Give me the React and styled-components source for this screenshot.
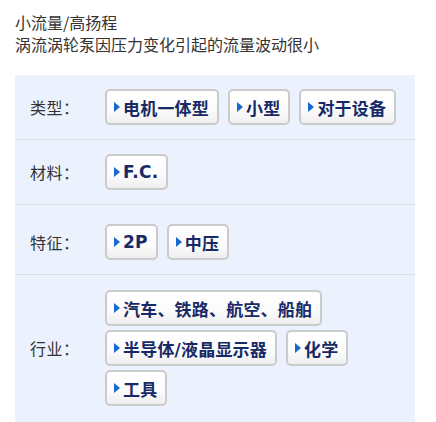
import React from "react";
import styled, { createGlobalStyle } from "styled-components";

const Global = createGlobalStyle`
  html, body { margin: 0; padding: 0; background: #fff; }
  body { font-family: "Noto Sans CJK SC", "Noto Sans", sans-serif; }
`;

const Page = styled.div`
  padding: 11px 21px 0 15px;
`;

const Intro = styled.div`
  font-size: 16px;
  line-height: 22px;
  color: #333;
  letter-spacing: 0;
  margin-bottom: 20px;
`;

const Panel = styled.div`
  background: #ebf1fd;
  padding-bottom: 2px;
`;

const Row = styled.div`
  display: flex;
  align-items: center;
  padding: ${(p) => p.$top || 14}px 10px 14px 0;
  border-top: ${(p) => (p.$first ? "none" : "1px solid #d9dde6")};
`;

const Label = styled.div`
  width: 75px;
  padding-left: 15px;
  flex: none;
  font-size: 16px;
  color: #333;
  letter-spacing: 0.5px;
`;

const Tags = styled.div`
  display: flex;
  flex-wrap: wrap;
  gap: 4px 9px;
  flex: 1;
`;

const Tag = styled.a`
  box-sizing: border-box;
  display: inline-flex;
  align-items: center;
  height: 36px;
  padding: 0 8px 0 7px;
  border: 2px solid #cbcbcb;
  border-radius: 5px;
  background: linear-gradient(#ffffff 0%, #fbfbfb 60%, #efefef 100%);
  color: #172a66;
  font-family: "DejaVu Sans", "Noto Sans CJK SC", sans-serif;
  font-size: 17px;
  font-weight: bold;
  letter-spacing: 0.2px;
  text-decoration: none;
  white-space: nowrap;
`;

const Arrow = styled.span`
  width: 0;
  height: 0;
  border-left: 6px solid #1768d1;
  border-top: 5px solid transparent;
  border-bottom: 5px solid transparent;
  margin-right: 3px;
`;

const rows = [
  { label: "类型：", tags: ["电机一体型", "小型", "对于设备"] },
  { label: "材料：", tags: ["F.C."] },
  { label: "特征：", tags: ["2P", "中压"], top: 19 },
  { label: "行业：", tags: ["汽车、铁路、航空、船舶", "半导体/液晶显示器", "化学", "工具"], top: 15 },
];

export default function App() {
  return (
    <Page>
      <Global />
      <Intro>
        小流量/高扬程
        <br />
        涡流涡轮泵因压力变化引起的流量波动很小
      </Intro>
      <Panel>
        {rows.map((r, i) => (
          <Row key={r.label} $first={i === 0} $top={r.top}>
            <Label>{r.label}</Label>
            <Tags>
              {r.tags.map((t) => (
                <Tag key={t} href="#">
                  <Arrow />
                  {t}
                </Tag>
              ))}
            </Tags>
          </Row>
        ))}
      </Panel>
    </Page>
  );
}
